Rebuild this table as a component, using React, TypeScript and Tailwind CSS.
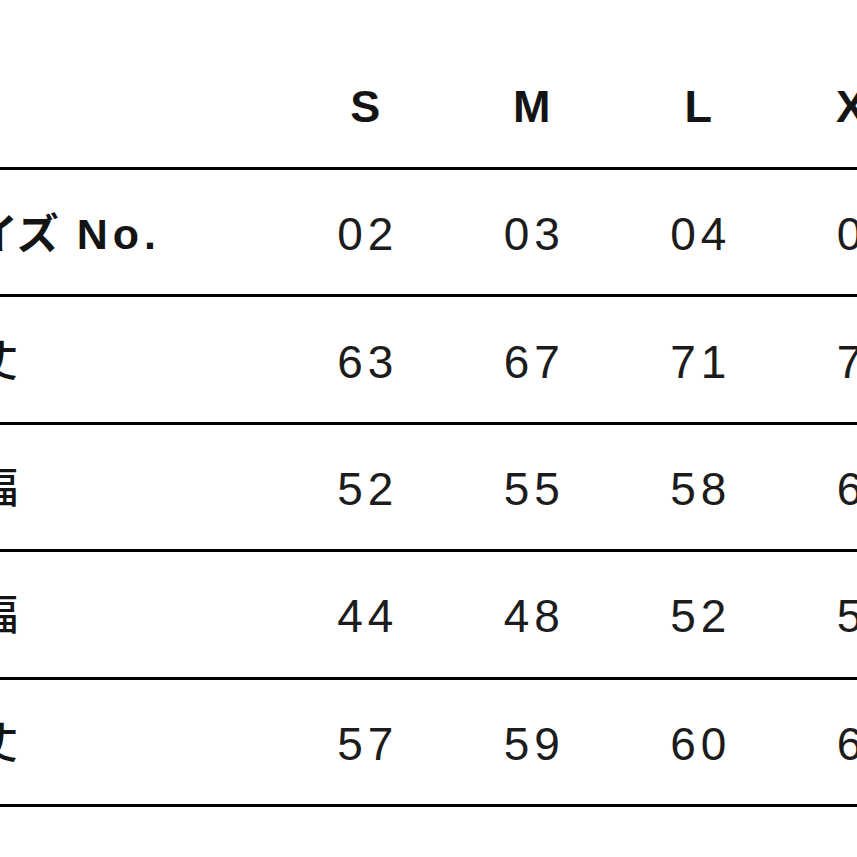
import React from 'react';

const SIZES = ['S', 'M', 'L', 'XL', 'XXL'];

const ROWS: { label: React.ReactNode; values: string[] }[] = [
  {
    label: (
      <span className="font-bold">
        サイズ<span className="ml-[18px] text-[43px] tracking-[5px]">No.</span>
      </span>
    ),
    values: ['02', '03', '04', '05', '06'],
  },
  { label: '着丈', values: ['63', '67', '71', '75', '79'] },
  { label: '身幅', values: ['52', '55', '58', '61', '64'] },
  { label: '肩幅', values: ['44', '48', '52', '56', '60'] },
  { label: '袖丈', values: ['57', '59', '60', '61', '62'] },
];

const FONT = "font-['Liberation_Sans','Noto_Sans_CJK_JP',sans-serif]";

const App: React.FC = () => {
  return (
    <div className={`w-[857px] h-[857px] overflow-hidden bg-white text-[#141414] ${FONT}`}>
      <div className="ml-[-66px] pt-[40px] w-[1100px]">
        {/* header */}
        <div className="flex items-center h-[130px] border-b-[3px] border-black pt-[6px]">
          <div className="w-[348px] shrink-0" />
          {SIZES.map((s) => (
            <div key={s} className="w-[166.5px] shrink-0 text-center text-[45px] font-bold leading-none">
              {s}
            </div>
          ))}
        </div>

        {ROWS.map((row, i) => (
          <div key={i} className="flex items-center h-[127.4px] border-b-[3px] border-black pt-[4px]">
            <div className="w-[348px] shrink-0 text-[42px] font-medium leading-none">{row.label}</div>
            {row.values.map((v, j) => (
              <div
                key={j}
                className="w-[166.5px] shrink-0 text-center text-[46px] leading-none tracking-[5px] pl-[5px] text-[#1c1c1c]"
              >
                {v}
              </div>
            ))}
          </div>
        ))}
      </div>
    </div>
  );
};

export default App;
